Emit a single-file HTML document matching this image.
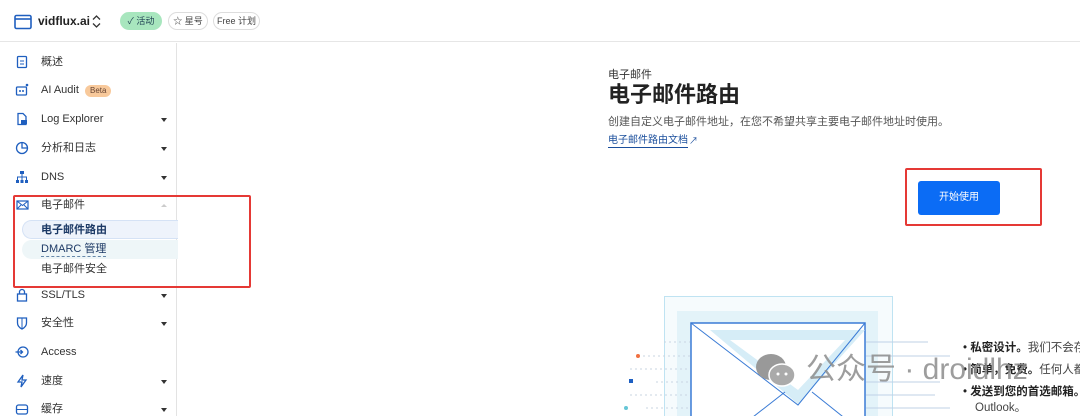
<!DOCTYPE html>
<html><head><meta charset="utf-8"><style>
*{margin:0;padding:0;box-sizing:border-box}
body{width:1080px;height:416px;overflow:hidden;background:#fff;font-family:"Liberation Sans","Noto Sans CJK SC",sans-serif;color:#222;position:relative}
.abs{position:absolute}
.hdr{left:0;top:0;width:1080px;height:42px;border-bottom:1px solid #e6e6e6}
.side{left:0;top:43px;width:177px;height:373px;border-right:1px solid #e3e3e3}
.item{position:absolute;left:41px;font-size:11px;color:#333;line-height:14px}
.ico{position:absolute;left:15px;width:14px;height:14px}
.car{position:absolute;left:161px;width:0;height:0;border-left:3.5px solid transparent;border-right:3.5px solid transparent;border-top:4px solid #333}
.pill{position:absolute;top:12px;height:18px;border-radius:9px;font-size:9px;line-height:16px;text-align:center;border:1px solid #ddd;color:#444}
</style></head><body>
<div class="abs hdr"></div>
<svg class="abs" style="left:14px;top:14px" width="18" height="16" viewBox="0 0 18 16"><rect x="1" y="1.5" width="16" height="13" rx="1.5" fill="none" stroke="#1f5fbf" stroke-width="1.6"/><line x1="1" y1="5" x2="17" y2="5" stroke="#1f5fbf" stroke-width="1.6"/></svg>
<div class="abs" style="left:38px;top:14px;font-size:12px;font-weight:bold;color:#222">vidflux.ai</div>
<svg class="abs" style="left:91px;top:14px" width="11" height="15" viewBox="0 0 11 15"><path d="M2 5.5L5.5 2L9 5.5M2 9.5L5.5 13L9 9.5" fill="none" stroke="#333" stroke-width="1.3"/></svg>
<div class="pill" style="left:120px;width:42px;background:#a8e6be;border-color:#a8e6be;color:#245">✓ 活动</div>
<div class="pill" style="left:168px;width:40px">☆ 星号</div>
<div class="pill" style="left:213px;width:47px">Free 计划</div>

<div class="abs side"></div>
<svg class="ico" style="top:55px" viewBox="0 0 14 14"><rect x="2.5" y="1.5" width="9" height="11" rx="1" fill="none" stroke="#1f5fbf" stroke-width="1.3"/><line x1="5" y1="6" x2="9" y2="6" stroke="#1f5fbf"/><line x1="5" y1="9" x2="9" y2="9" stroke="#1f5fbf"/></svg>
<div class="item" style="top:55px">概述</div>
<svg class="ico" style="top:83px" viewBox="0 0 14 14"><rect x="1.5" y="4" width="10" height="8" rx="1" fill="none" stroke="#1f5fbf" stroke-width="1.3"/><circle cx="5" cy="8" r="1" fill="#1f5fbf"/><circle cx="8" cy="8" r="1" fill="#1f5fbf"/><circle cx="12" cy="2" r="1.3" fill="#1f5fbf"/></svg>
<div class="item" style="top:83px">AI Audit <span style="display:inline-block;background:#f8c99b;border-radius:7px;font-size:8px;padding:0 5px;line-height:12px;color:#643;margin-left:3px">Beta</span></div>
<svg class="ico" style="top:112px" viewBox="0 0 14 14"><path d="M3 1.5h5l3 3V12.5H3z" fill="none" stroke="#1f5fbf" stroke-width="1.3"/><rect x="6" y="8" width="6" height="4" fill="#1f5fbf"/></svg>
<div class="item" style="top:112px">Log Explorer</div><div class="car" style="top:118px"></div>
<svg class="ico" style="top:141px" viewBox="0 0 14 14"><circle cx="7" cy="7" r="5.5" fill="none" stroke="#1f5fbf" stroke-width="1.3"/><path d="M7 1.5V7h5.5" fill="none" stroke="#1f5fbf" stroke-width="1.3"/></svg>
<div class="item" style="top:141px">分析和日志</div><div class="car" style="top:147px"></div>
<svg class="ico" style="top:170px" viewBox="0 0 14 14"><rect x="5" y="1" width="4" height="3" fill="#1f5fbf"/><rect x="1" y="10" width="3" height="3" fill="#1f5fbf"/><rect x="5.5" y="10" width="3" height="3" fill="#1f5fbf"/><rect x="10" y="10" width="3" height="3" fill="#1f5fbf"/><path d="M7 4v6M2.5 10V7h9v3" fill="none" stroke="#1f5fbf"/></svg>
<div class="item" style="top:170px">DNS</div><div class="car" style="top:176px"></div>
<svg class="ico" style="top:198px" viewBox="0 0 14 14"><rect x="2" y="3" width="11" height="8" fill="none" stroke="#1f5fbf" stroke-width="1.2"/><path d="M2 3l5.5 4.5L13 3M2 11l4-4M13 11l-4-4" fill="none" stroke="#1f5fbf"/></svg>
<div class="item" style="top:198px">电子邮件</div>
<div class="abs" style="left:161px;top:204px;border-left:3px solid transparent;border-right:3px solid transparent;border-bottom:3px solid #ccc"></div>
<div class="abs" style="left:22px;top:220px;width:156px;height:19px;background:#eef3fb;border:1px solid #d5e2f5;border-right:none;border-radius:10px 0 0 10px"></div>
<div class="item" style="top:223px;font-weight:bold;color:#1d3a66">电子邮件路由</div>
<div class="abs" style="left:22px;top:240px;width:156px;height:19px;background:#eef6f8;border-radius:10px 0 0 10px"></div>
<div class="item" style="top:242px;color:#1d3a66;border-bottom:1px dashed #6688aa">DMARC 管理</div>
<div class="item" style="top:262px">电子邮件安全</div>
<div class="abs" style="left:13px;top:195px;width:238px;height:93px;border:2px solid #e53935;border-radius:2px"></div>
<svg class="ico" style="top:288px" viewBox="0 0 14 14"><rect x="2.5" y="6" width="9" height="7" fill="none" stroke="#1f5fbf" stroke-width="1.3"/><path d="M4.5 6V4a2.5 2.5 0 0 1 5 0v2" fill="none" stroke="#1f5fbf" stroke-width="1.3"/></svg>
<div class="item" style="top:288px">SSL/TLS</div><div class="car" style="top:294px"></div>
<svg class="ico" style="top:316px" viewBox="0 0 14 14"><path d="M2.5 2h9v5c0 3-2.5 5-4.5 6C5 12 2.5 10 2.5 7z" fill="none" stroke="#1f5fbf" stroke-width="1.3"/><path d="M7 2v11" stroke="#1f5fbf"/></svg>
<div class="item" style="top:316px">安全性</div><div class="car" style="top:322px"></div>
<svg class="ico" style="top:345px" viewBox="0 0 14 14"><circle cx="8" cy="7" r="5" fill="none" stroke="#1f5fbf" stroke-width="1.3"/><path d="M0.5 7h7M5.5 5l2 2-2 2" fill="none" stroke="#1f5fbf" stroke-width="1.3"/></svg>
<div class="item" style="top:345px">Access</div>
<svg class="ico" style="top:374px" viewBox="0 0 14 14"><path d="M8 1L3 8h4l-1 5 5-7H7z" fill="none" stroke="#1f5fbf" stroke-width="1.3"/></svg>
<div class="item" style="top:374px">速度</div><div class="car" style="top:380px"></div>
<svg class="ico" style="top:402px" viewBox="0 0 14 14"><rect x="1.5" y="3" width="11" height="9" rx="2" fill="none" stroke="#1f5fbf" stroke-width="1.3"/><line x1="1.5" y1="7.5" x2="12.5" y2="7.5" stroke="#1f5fbf"/></svg>
<div class="item" style="top:402px">缓存</div><div class="car" style="top:408px"></div>

<div class="abs" style="left:608px;top:66px;font-size:11px;color:#333">电子邮件</div>
<div class="abs" style="left:608px;top:80px;font-size:22px;font-weight:bold;color:#222;line-height:30px">电子邮件路由</div>
<div class="abs" style="left:608px;top:113px;font-size:11px;color:#555">创建自定义电子邮件地址，在您不希望共享主要电子邮件地址时使用。</div>
<div class="abs" style="left:608px;top:135px;font-size:10px;color:#1a4e9c;border-bottom:1px solid #1a4e9c;line-height:12px">电子邮件路由文档</div>
<div class="abs" style="left:689px;top:134px;font-size:9px;color:#1a4e9c">↗</div>
<div class="abs" style="left:905px;top:168px;width:137px;height:58px;border:2px solid #e53935;border-radius:2px"></div>
<div class="abs" style="left:918px;top:181px;width:82px;height:34px;background:#0b6cf5;border-radius:3px;color:#fff;font-size:10px;text-align:center;line-height:34px">开始使用</div>

<svg class="abs" style="left:600px;top:290px" width="380" height="126" viewBox="0 0 380 126">
<rect x="64.5" y="6.5" width="228" height="130" fill="#f6fbfd" stroke="#bfe3f2"/>
<rect x="77" y="21" width="201" height="110" fill="#e3f3f9"/>
<rect x="91" y="33" width="174" height="100" fill="#fff" stroke="#3a7bd5" stroke-width="1.5"/>
<path d="M110 40h155L198 114z" fill="#d6edf7"/>
<path d="M130 50h115L198 100z" fill="#fff"/>
<path d="M91 33L198 115L265 33" stroke="#3a7bd5" fill="none"/>
<path d="M144 134L185 102 M212 102L252 134" stroke="#3a7bd5"/>
<g stroke="#c8d4e2" stroke-dasharray="2 3"><line x1="64" y1="52" x2="90" y2="52"/><line x1="43" y1="66" x2="90" y2="66"/><line x1="30" y1="79" x2="90" y2="79"/><line x1="56" y1="92" x2="90" y2="92"/><line x1="30" y1="105" x2="90" y2="105"/><line x1="46" y1="118" x2="90" y2="118"/></g>
<circle cx="38" cy="66" r="2" fill="#f07040"/><rect x="29" y="89" width="4" height="4" fill="#1d5fc2"/><circle cx="26" cy="118" r="2" fill="#66c6d6"/>
<g stroke="#bfd0e6"><line x1="266" y1="52" x2="328" y2="52"/><line x1="266" y1="66" x2="350" y2="66"/><line x1="266" y1="92" x2="340" y2="92"/><line x1="266" y1="105" x2="335" y2="105"/><line x1="266" y1="118" x2="350" y2="118"/></g>
</svg>
<div class="abs" style="left:963px;top:337px;font-size:11.5px;line-height:22px;color:#222;white-space:nowrap">
<div>• <b>私密设计。</b><span style="color:#444">我们不会存</span></div>
<div>• <b>简单，免费。</b><span style="color:#444">任何人都</span></div>
<div>• <b>发送到您的首选邮箱。</b></div>
</div>
<div class="abs" style="left:975px;top:399px;font-size:11.5px;color:#444">Outlook。</div>
<svg class="abs" style="left:754px;top:352px" width="44" height="36" viewBox="0 0 44 36"><ellipse cx="17" cy="15" rx="15" ry="13" fill="#999"/><ellipse cx="28" cy="23" rx="13" ry="11" fill="#aaa" stroke="#fff" stroke-width="1.5"/><circle cx="24" cy="22" r="1.5" fill="#fff"/><circle cx="32" cy="22" r="1.5" fill="#fff"/></svg>
<div class="abs" style="left:806px;top:353px;font-size:30px;color:rgba(140,140,140,0.85);white-space:nowrap;line-height:34px">公众号 · droidlhz</div>
</body></html>
